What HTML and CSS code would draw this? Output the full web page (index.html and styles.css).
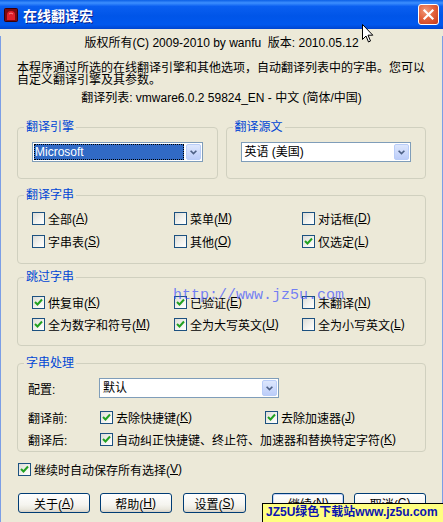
FILE: index.html
```html
<!DOCTYPE html>
<html>
<head>
    <title>在线翻译宏</title>
    <meta charset="utf-8">
    <link rel="stylesheet" href="styles.css">
</head>
<body>
<div class="window">
    <div class="titlebar">
        <svg class="app-icon" width="14" height="14" viewBox="0 0 14 14">
            <rect x="0.5" y="0.5" width="13" height="13" rx="1" fill="#7a0a12" stroke="#3a0005"/>
            <path d="M3 12 L3 7 Q3 3 7 3 Q11 3 11 7 L11 12 Z" fill="#e0202c"/>
            <path d="M5 6 Q7 4 9 6" stroke="#ff8a8a" stroke-width="1" fill="none"/>
        </svg>
        <span class="title">在线翻译宏</span>
        <span class="close-btn">
            <svg width="13" height="13" viewBox="0 0 13 13">
                <path d="M2.5 2.5 L10.5 10.5 M10.5 2.5 L2.5 10.5" stroke="#fff" stroke-width="2.2" stroke-linecap="square"/>
            </svg>
        </span>
    </div>

    <div class="content">
        <p class="copyright">版权所有(C) 2009-2010 by wanfu&nbsp; 版本: 2010.05.12</p>
        <p class="intro">本程序通过所选的在线翻译引擎和其他选项，自动翻译列表中的字串。您可以<br>自定义翻译引擎及其参数。</p>
        <p class="list-name">翻译列表: vmware6.0.2 59824_EN - 中文 (简体/中国)</p>

        <div class="engine-row">
            <fieldset class="group">
                <legend>翻译引擎</legend>
                <div class="group-body engine-body">
                    <div class="combo">
                        <span class="combo-text selected">Microsoft</span>
                        <span class="combo-btn"><svg width="15" height="17" viewBox="0 0 15 17"><polyline points="4,7 7.5,10.5 11,7" fill="none" stroke="#4d6185" stroke-width="2"/></svg></span>
                    </div>
                </div>
            </fieldset>
            <fieldset class="group">
                <legend>翻译源文</legend>
                <div class="group-body engine-body">
                    <div class="combo">
                        <span class="combo-text">英语 (美国)</span>
                        <span class="combo-btn"><svg width="15" height="17" viewBox="0 0 15 17"><polyline points="4,7 7.5,10.5 11,7" fill="none" stroke="#4d6185" stroke-width="2"/></svg></span>
                    </div>
                </div>
            </fieldset>
        </div>

        <fieldset class="group group-strings">
            <legend>翻译字串</legend>
            <div class="group-body check-grid">
                <label class="check"><span class="box"></span>全部(<u>A</u>)</label>
                <label class="check"><span class="box"></span>菜单(<u>M</u>)</label>
                <label class="check"><span class="box"></span>对话框(<u>D</u>)</label>
                <label class="check"><span class="box"></span>字串表(<u>S</u>)</label>
                <label class="check"><span class="box"></span>其他(<u>O</u>)</label>
                <label class="check"><span class="box on"><svg width="11" height="11" viewBox="0 0 11 11"><polyline points="2,5 4.5,7.5 9,2.5" fill="none" stroke="#21a121" stroke-width="2"/></svg></span>仅选定(<u>L</u>)</label>
            </div>
        </fieldset>

        <fieldset class="group group-skip">
            <legend>跳过字串</legend>
            <div class="group-body check-grid">
                <label class="check"><span class="box on"><svg width="11" height="11" viewBox="0 0 11 11"><polyline points="2,5 4.5,7.5 9,2.5" fill="none" stroke="#21a121" stroke-width="2"/></svg></span>供复审(<u>K</u>)</label>
                <label class="check"><span class="box on"><svg width="11" height="11" viewBox="0 0 11 11"><polyline points="2,5 4.5,7.5 9,2.5" fill="none" stroke="#21a121" stroke-width="2"/></svg></span>已验证(<u>E</u>)</label>
                <label class="check"><span class="box"></span>未翻译(<u>N</u>)</label>
                <label class="check"><span class="box on"><svg width="11" height="11" viewBox="0 0 11 11"><polyline points="2,5 4.5,7.5 9,2.5" fill="none" stroke="#21a121" stroke-width="2"/></svg></span>全为数字和符号(<u>M</u>)</label>
                <label class="check"><span class="box on"><svg width="11" height="11" viewBox="0 0 11 11"><polyline points="2,5 4.5,7.5 9,2.5" fill="none" stroke="#21a121" stroke-width="2"/></svg></span>全为大写英文(<u>U</u>)</label>
                <label class="check"><span class="box"></span>全为小写英文(<u>L</u>)</label>
            </div>
        </fieldset>

        <fieldset class="group group-process">
            <legend>字串处理</legend>
            <div class="group-body process-body">
                <div class="process-row row-config">
                    <span class="row-label">配置:</span>
                    <div class="combo combo-config">
                        <span class="combo-text">默认</span>
                        <span class="combo-btn"><svg width="15" height="17" viewBox="0 0 15 17"><polyline points="4,7 7.5,10.5 11,7" fill="none" stroke="#4d6185" stroke-width="2"/></svg></span>
                    </div>
                </div>
                <div class="process-row row-before">
                    <span class="row-label">翻译前:</span>
                    <label class="check first-opt"><span class="box on"><svg width="11" height="11" viewBox="0 0 11 11"><polyline points="2,5 4.5,7.5 9,2.5" fill="none" stroke="#21a121" stroke-width="2"/></svg></span>去除快捷键(<u>K</u>)</label>
                    <label class="check"><span class="box on"><svg width="11" height="11" viewBox="0 0 11 11"><polyline points="2,5 4.5,7.5 9,2.5" fill="none" stroke="#21a121" stroke-width="2"/></svg></span>去除加速器(<u>J</u>)</label>
                </div>
                <div class="process-row row-after">
                    <span class="row-label">翻译后:</span>
                    <label class="check"><span class="box on"><svg width="11" height="11" viewBox="0 0 11 11"><polyline points="2,5 4.5,7.5 9,2.5" fill="none" stroke="#21a121" stroke-width="2"/></svg></span>自动纠正快捷键、终止符、加速器和替换特定字符(<u>K</u>)</label>
                </div>
            </div>
        </fieldset>

        <label class="check autosave"><span class="box on"><svg width="11" height="11" viewBox="0 0 11 11"><polyline points="2,5 4.5,7.5 9,2.5" fill="none" stroke="#21a121" stroke-width="2"/></svg></span>继续时自动保存所有选择(<u>V</u>)</label>

        <div class="buttons">
            <span class="btn btn-about">关于(<u>A</u>)</span>
            <span class="btn btn-help">帮助(<u>H</u>)</span>
            <span class="btn btn-setup">设置(<u>S</u>)</span>
            <span class="btn btn-next">继续(<u>N</u>)</span>
            <span class="btn btn-cancel">取消(<u>C</u>)</span>
        </div>
    </div>

    <!-- watermark and cursor on top of the dialog -->
    <div class="url-mark">http://www.jz5u.com</div>
    <div class="site-mark">JZ5U绿色下载站www.jz5u.com</div>
    <svg class="cursor" width="12" height="19" viewBox="0 0 12 19">
        <path d="M0.5 0.5 L0.5 15.5 L4 12 L6.5 18 L8.5 17 L6 11.2 L10.8 11.2 Z" fill="#fff" stroke="#000" stroke-width="1"/>
    </svg>
</div>
</body>
</html>
```

FILE: styles.css
```css
* {
    box-sizing: border-box;
}
body {
    margin: 0;
    padding: 0;
    font-family: "Liberation Sans", "Noto Sans CJK SC", sans-serif;
    font-size: 12px;
    color: #000;
    background-color: #ece9d8;
}
p {
    margin: 0;
}
u {
    text-decoration: underline;
    text-underline-offset: 1px;
}
.window {
    position: relative;
    width: 443px;
    height: 522px;
    overflow: hidden;
    background-color: #ece9d8;
}
.titlebar {
    height: 29px;
    display: flex;
    align-items: center;
    padding: 0 4px 0 4px;
    background: linear-gradient(to bottom, #0b5fe6 0%, #3d8ffe 10%, #0a5ff0 22%, #0055e8 55%, #0058ee 85%, #0045cf 100%);
}
.app-icon {
    flex: none;
    margin-top: 1px;
}
.title {
    margin-left: 5px;
    color: #fff;
    font-weight: bold;
    font-size: 14px;
    text-shadow: 1px 1px 0 #0a1e8a;
}
.close-btn {
    margin-left: auto;
    width: 21px;
    height: 21px;
    border: 1px solid #fff;
    border-radius: 3px;
    background: radial-gradient(circle at 35% 30%, #f09a7a 0%, #e4633d 45%, #c5391a 100%);
    display: flex;
    align-items: center;
    justify-content: center;
}
.content {
    height: 493px;
    padding: 0 16px;
    border-left: 1px solid #7b9ee6;
    border-right: 1px solid #7b9ee6;
}
.copyright {
    margin-top: 7px;
    line-height: 14px;
    text-align: center;
}
.intro {
    margin-top: 12px;
    line-height: 12px;
    white-space: nowrap;
}
.list-name {
    margin-top: 5px;
    line-height: 14px;
    text-align: center;
}

/* group boxes */
.group {
    margin: 0;
    padding: 0;
    min-width: 0;
    border: 1px solid #d0d0bf;
    border-radius: 4px;
}
.group legend {
    margin-left: 6px;
    padding: 0 2px;
    line-height: 14px;
    color: #0046d5;
}
.engine-row {
    margin-top: 15px;
    display: grid;
    grid-template-columns: 1fr 1fr;
    gap: 8px;
}
.engine-body {
    padding: 8px 14px 16px;
}
.group-strings {
    margin-top: 9px;
}
.group-strings .group-body {
    padding: 7px 0 13px 14px;
    row-gap: 5px;
}
.group-skip {
    margin-top: 6px;
}
.group-skip .group-body {
    padding: 9px 0 12px 14px;
    row-gap: 4px;
}
.check-grid {
    display: grid;
    grid-template-columns: 142px 128px 1fr;
}

/* combo box */
.combo {
    height: 20px;
    display: flex;
    align-items: center;
    padding: 1px;
    border: 1px solid #7f9db9;
    background-color: #fff;
}
.combo-text {
    flex: 1;
    height: 16px;
    line-height: 16px;
    padding-left: 2px;
    white-space: nowrap;
}
.combo-text.selected {
    margin-right: 2px;
    padding-left: 1px;
    background-color: #316ac5;
    color: #fff;
    outline: 1px dotted #000;
    outline-offset: -1px;
}
.combo-btn {
    flex: none;
    width: 15px;
    height: 16px;
    border: 1px solid #b9cdf8;
    border-radius: 2px;
    background: linear-gradient(to bottom, #dde7fd, #bccdf9);
    display: flex;
    align-items: center;
    justify-content: center;
}
.combo-btn svg {
    width: 13px;
    height: 14px;
}

/* checkboxes */
.check {
    height: 18px;
    display: flex;
    align-items: center;
    white-space: nowrap;
}
.box {
    flex: none;
    width: 13px;
    height: 13px;
    margin-right: 3px;
    border: 1px solid #1c5180;
    background: linear-gradient(135deg, #dcdcd7 0%, #f4f4f0 60%, #ffffff 100%);
    display: flex;
    align-items: center;
    justify-content: center;
}

/* string processing */
.group-process {
    margin-top: 10px;
}
.process-body {
    padding: 8px 0 3px 10px;
}
.process-row {
    display: flex;
    align-items: center;
}
.row-label {
    width: 71px;
    flex: none;
}
.row-config {
    height: 20px;
}
.combo-config {
    width: 180px;
}
.row-before {
    margin-top: 10px;
}
.row-before .check,
.row-after .check {
    margin-left: 1px;
}
.first-opt {
    width: 164px;
}
.row-after {
    margin-top: 4px;
}
.autosave {
    margin-top: 8px;
    margin-left: 1px;
}

/* buttons */
.buttons {
    margin-top: 15px;
    display: flex;
}
.btn {
    height: 20px;
    width: 72px;
    display: flex;
    align-items: center;
    justify-content: center;
    border: 1px solid #003c74;
    border-radius: 3px;
    background: linear-gradient(to bottom, #ffffff 0%, #f5f4ef 60%, #e9e7dd 85%, #d6d0c5 100%);
}
.btn-about {
    margin-left: 1px;
}
.btn-help {
    margin-left: 10px;
}
.btn-setup {
    margin-left: 11px;
    width: 64px;
}
.btn-next {
    margin-left: 26px;
    box-shadow: inset 0 0 0 1px #c4d3f7;
}
.btn-cancel {
    margin-left: 10px;
}

/* overlays */
.url-mark {
    position: absolute;
    left: 173px;
    top: 287px;
    font-family: "Liberation Mono", monospace;
    font-size: 15px;
    color: rgba(60, 80, 255, 0.7);
    white-space: nowrap;
}
.site-mark {
    position: absolute;
    left: 262px;
    top: 503px;
    width: 181px;
    height: 19px;
    line-height: 17px;
    padding-left: 3px;
    border: 1px solid #000;
    border-right: none;
    border-bottom: none;
    background-color: #ffff80;
    color: #0b14b0;
    font-weight: bold;
    font-size: 12px;
    white-space: nowrap;
}
.cursor {
    position: absolute;
    left: 362px;
    top: 24px;
}
```
